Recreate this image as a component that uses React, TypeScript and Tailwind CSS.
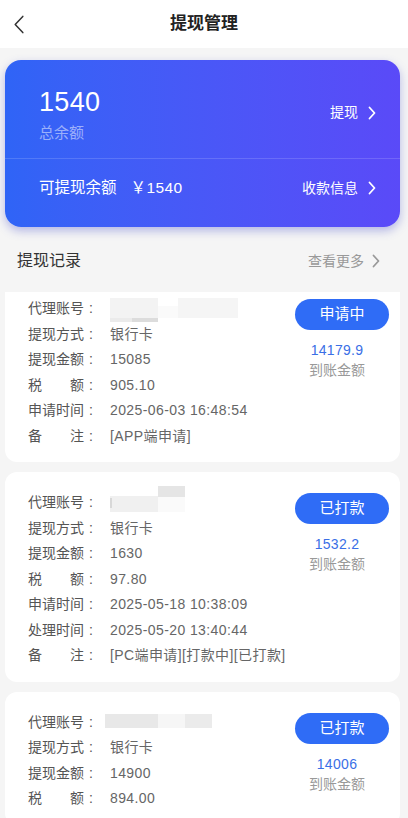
import React from "react";

const font = {
  fontFamily: "'Liberation Sans', 'Noto Sans CJK SC', sans-serif",
};

function Chevron({ className }: { className?: string }) {
  return (
    <svg viewBox="0 0 8 14" className={className} fill="none">
      <polyline
        points="1.5,1.5 6.5,7 1.5,12.5"
        stroke="currentColor"
        strokeWidth="1.8"
        strokeLinecap="round"
        strokeLinejoin="round"
      />
    </svg>
  );
}

type Row = { label: string[]; value: React.ReactNode };

type Record = {
  status: string;
  amount: string;
  account: React.ReactNode;
  rows: Row[];
};

// blurred account numbers
const maskA = (
  <div className="relative h-[24px] w-[130px] mt-[2px]">
    <div className="absolute left-0 top-0 h-[20px] w-[48px] bg-[#f3f3f3]" />
    <div className="absolute left-[48px] top-[8px] h-[12px] w-[20px] bg-[#fafafa]" />
    <div className="absolute left-[68px] top-0 h-[20px] w-[60px] bg-[#f5f5f5]" />
    <div className="absolute left-0 top-[20px] h-[4px] w-[22px] bg-[#ebebeb]" />
    <div className="absolute left-[22px] top-[20px] h-[4px] w-[26px] bg-[#dcdcdc]" />
  </div>
);

const maskB = (
  <div className="relative h-[26px] w-[80px] -mt-[8px]">
    <div className="absolute left-[48px] top-0 h-[11px] w-[27px] bg-[#e5e5e5]" />
    <div className="absolute left-0 top-[10px] h-[16px] w-[48px] bg-[#f0f0f0]" />
    <div className="absolute left-[48px] top-[11px] h-[15px] w-[27px] bg-[#fafafa]" />
    <div className="absolute left-0 top-[12px] h-[10px] w-[2px] bg-[#d8d8d8]" />
  </div>
);

const maskC = (
  <div className="relative h-[16px] w-[110px] -ml-[5px]">
    <div className="absolute left-0 top-0 h-[14px] w-[53px] bg-[#e8e8e8]" />
    <div className="absolute left-[53px] top-0 h-[14px] w-[27px] bg-[#f6f6f6]" />
    <div className="absolute left-[80px] top-0 h-[14px] w-[27px] bg-[#ebebeb]" />
  </div>
);

const records: Record[] = [
  {
    status: "申请中",
    amount: "14179.9",
    account: maskA,
    rows: [
      { label: ["提现方式"], value: "银行卡" },
      { label: ["提现金额"], value: "15085" },
      { label: ["税", "额"], value: "905.10" },
      { label: ["申请时间"], value: "2025-06-03 16:48:54" },
      { label: ["备", "注"], value: "[APP端申请]" },
    ],
  },
  {
    status: "已打款",
    amount: "1532.2",
    account: maskB,
    rows: [
      { label: ["提现方式"], value: "银行卡" },
      { label: ["提现金额"], value: "1630" },
      { label: ["税", "额"], value: "97.80" },
      { label: ["申请时间"], value: "2025-05-18 10:38:09" },
      { label: ["处理时间"], value: "2025-05-20 13:40:44" },
      { label: ["备", "注"], value: "[PC端申请][打款中][已打款]" },
    ],
  },
  {
    status: "已打款",
    amount: "14006",
    account: maskC,
    rows: [
      { label: ["提现方式"], value: "银行卡" },
      { label: ["提现金额"], value: "14900" },
      { label: ["税", "额"], value: "894.00" },
    ],
  },
];

function Label({ parts }: { parts: string[] }) {
  return (
    <div className="flex w-[82px] shrink-0 text-[#555]">
      <div className="flex w-[56px] justify-between">
        {parts.map((p, i) => (
          <span key={i}>{p}</span>
        ))}
      </div>
      <span className="w-[14px] text-center">:</span>
    </div>
  );
}

function RecordCard({ rec, first }: { rec: Record; first?: boolean }) {
  return (
    <div
      className={
        "ml-[5px] mr-[8px] bg-white rounded-xl flex pl-[23px] pr-[11px] pt-[18px] pb-[13px] " +
        (first ? "-mt-[14px]" : "mt-[10px]")
      }
    >
      <div className="flex-1 text-[14px] leading-[25.5px]">
        <div className="flex items-center h-[25.5px]">
          <Label parts={["代理账号"]} />
          {rec.account}
        </div>
        {rec.rows.map((r, i) => (
          <div key={i} className="flex">
            <Label parts={r.label} />
            <span className="text-[#666] tracking-[0.4px]">{r.value}</span>
          </div>
        ))}
      </div>
      <div className="w-[94px] mt-[3px] flex flex-col items-center">
        <div className="w-[94px] h-[31px] rounded-full bg-[#2f6cf6] text-white text-[15px] flex items-center justify-center">
          {rec.status}
        </div>
        <div className="mt-[10px] mr-[10px] text-[14px] leading-[20px] tracking-[0.3px] text-[#3a6fe6]">
          {rec.amount}
        </div>
        <div className="mr-[10px] text-[14px] leading-[20px] text-[#999]">
          到账金额
        </div>
      </div>
    </div>
  );
}

export default function App() {
  return (
    <div
      className="w-[408px] h-[818px] bg-[#f5f5f5] flex flex-col overflow-hidden"
      style={font}
    >
      <div className="h-[48px] bg-white flex items-center relative shrink-0">
        <svg
          viewBox="0 0 12 20"
          className="absolute left-[13px] top-[15px] w-[12px] h-[19px] text-[#333]"
          fill="none"
        >
          <polyline
            points="10,1.5 2,10 10,18.5"
            stroke="currentColor"
            strokeWidth="1.6"
            strokeLinejoin="round"
            strokeLinecap="round"
          />
        </svg>
        <div className="flex-1 text-center text-[17px] font-bold text-[#222]">
          提现管理
        </div>
      </div>

      <div className="mt-[12px] ml-[5px] mr-[8px] h-[167px] rounded-2xl bg-gradient-to-r from-[#2f64f6] to-[#5a4af8] shadow-[0_4px_10px_rgba(60,70,200,0.35)] text-white flex flex-col shrink-0">
        <div className="h-[99px] flex items-start justify-between pl-[34px] pr-[24px] pt-[27px] border-b border-white/15">
          <div>
            <div className="text-[27px] leading-[30px] tracking-[0.3px]">1540</div>
            <div className="mt-[6px] text-[15px] leading-[20px] text-white/50">
              总余额
            </div>
          </div>
          <div className="flex items-center gap-[10px] text-[14px] mt-[15px]">
            <span>提现</span>
            <Chevron className="w-[8px] h-[14px]" />
          </div>
        </div>
        <div className="flex-1 flex items-center justify-between pl-[34px] pr-[24px] pb-[10px]">
          <div className="flex items-center text-[15.5px]">
            <span>可提现余额</span>
            <span className="ml-[14px] tracking-[0.4px]">￥1540</span>
          </div>
          <div className="flex items-center gap-[10px] text-[14px]">
            <span>收款信息</span>
            <Chevron className="w-[8px] h-[14px]" />
          </div>
        </div>
      </div>

      <div className="mt-[22px] mb-[19px] h-[24px] flex items-center justify-between pl-[17px] pr-[28px] shrink-0">
        <span className="text-[16px] text-[#333]">提现记录</span>
        <div className="flex items-center gap-[8px] text-[14px] text-[#999]">
          <span>查看更多</span>
          <Chevron className="w-[8px] h-[14px]" />
        </div>
      </div>

      <div className="flex-1 overflow-hidden">
        {records.map((r, i) => (
          <RecordCard key={i} rec={r} first={i === 0} />
        ))}
      </div>
    </div>
  );
}
